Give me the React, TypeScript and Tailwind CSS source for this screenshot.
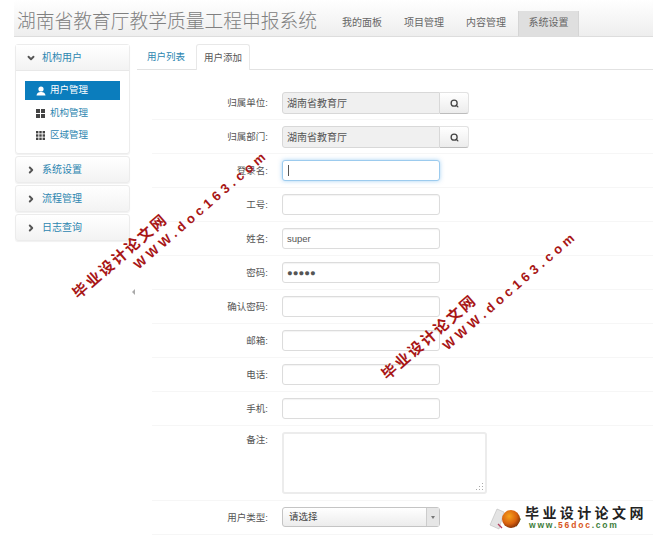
import { ChevronDown, ChevronRight, Search } from "lucide-react";

const navItems = ["我的面板", "项目管理", "内容管理"];

function UserIcon() {
  return (
    <svg width="10" height="10" viewBox="0 0 10 10" fill="#fff">
      <circle cx="5" cy="3" r="2.6" />
      <path d="M0.5 9.5 C1 6.5 3 6 5 6 C7 6 9 6.5 9.5 9.5 Z" />
    </svg>
  );
}

function LargeGrid() {
  return (
    <svg width="9" height="9" viewBox="0 0 9 9" fill="#444">
      <rect x="0" y="0" width="4" height="4" />
      <rect x="5" y="0" width="4" height="4" />
      <rect x="0" y="5" width="4" height="4" />
      <rect x="5" y="5" width="4" height="4" />
    </svg>
  );
}

function SmallGrid() {
  return (
    <svg width="9" height="9" viewBox="0 0 9 9" fill="#444">
      {[0, 3.3, 6.6].map((y) =>
        [0, 3.3, 6.6].map((x) => <rect key={`${x}-${y}`} x={x} y={y} width="2.4" height="2.4" />)
      )}
    </svg>
  );
}

function Collapsed({ title }: { title: string }) {
  return (
    <div className="h-[27px] rounded-[3px] border border-[#ececec] bg-gradient-to-b from-white to-[#f3f3f3] flex items-center pl-[10px] gap-[6px] shadow-[0_1px_1px_rgba(0,0,0,0.06)]">
      <ChevronRight size={10} strokeWidth={4.5} className="text-[#555]" />
      <span className="text-[10px] text-[#2d86b0]">{title}</span>
    </div>
  );
}

function Row({ label, children, tall }: { label: string; children: React.ReactNode; tall?: boolean }) {
  return (
    <div className={`flex border-b border-[#f6f6f6] pt-[6px] ${tall ? "h-[75px]" : "h-[34px]"}`}>
      <div className={`w-[116px] text-right text-[9.5px] text-[#555] ${tall ? "pt-[1px]" : "leading-[21px]"}`}>{label}:</div>
      <div className="ml-[14px]">{children}</div>
    </div>
  );
}

function Field({ value }: { value?: string }) {
  return (
    <div className="w-[158px] h-[21px] rounded-[3px] border border-[#dcdcdc] bg-white shadow-[inset_0_1px_1px_rgba(0,0,0,0.05)] px-[4px] text-[9.5px] leading-[19px] text-[#555]">
      {value}
    </div>
  );
}

function Lookup() {
  return (
    <div className="flex">
      <div className="w-[158px] h-[22px] rounded-l-[3px] border border-[#d8d8d8] bg-[#f0f0f0] px-[4px] text-[10px] leading-[21px] text-[#555]">
        湖南省教育厅
      </div>
      <div className="w-[29px] h-[22px] rounded-r-[3px] border border-l-0 border-[#e2e2e2] border-b-[#bcbcbc] bg-gradient-to-b from-white to-[#ececec] flex items-center justify-center">
        <Search size={9} strokeWidth={3.5} className="text-[#444]" />
      </div>
    </div>
  );
}

function Watermark({ place }: { place: string }) {
  return (
    <div className={`absolute origin-top-left -rotate-[41deg] text-[#a81616] font-bold whitespace-nowrap pointer-events-none ${place}`}>
      <div className="text-[15px] leading-[18px] tracking-[2.2px]">毕业设计论文网</div>
      <div className="text-[13px] leading-[17px] tracking-[4.2px] ml-[65px]">WWW.doc163.com</div>
    </div>
  );
}

export default function App() {
  return (
    <div className="relative w-[653px] h-[536px] overflow-hidden bg-white [font-family:'Liberation_Sans','Noto_Sans_CJK_SC',sans-serif]">
      {/* Top bar */}
      <div className="h-[37px] flex items-end bg-gradient-to-b from-white to-[#eeeeee] border-b border-[#dddddd] ml-[14px]">
        <div className="w-[316px] self-center pt-[7px] pl-[3px] text-[18.75px] font-light leading-[30px] text-[#808080] whitespace-nowrap">
          湖南省教育厅教学质量工程申报系统
        </div>
        <div className="flex h-[25px] ml-[12px]">
          {navItems.map((item) => (
            <div key={item} className="w-[62px] text-[10px] leading-[24px] text-[#666]">
              {item}
            </div>
          ))}
          <div className="-ml-[10px] w-[61px] bg-[#dfdfdf] border-x border-[#d5d5d5] text-center text-[10px] leading-[24px] text-[#666]">
            系统设置
          </div>
        </div>
      </div>

      <div className="flex pt-[7px]">
        {/* Sidebar */}
        <div className="w-[115px] ml-[15px] flex flex-col gap-[2px]">
          <div className="rounded-[3px] border border-[#ececec] shadow-[0_1px_1px_rgba(0,0,0,0.06)]">
            <div className="h-[26px] bg-gradient-to-b from-white to-[#f3f3f3] border-b border-[#e8e8e8] flex items-center pl-[10px] gap-[6px]">
              <ChevronDown size={10} strokeWidth={4.5} className="text-[#555]" />
              <span className="text-[10px] text-[#2d86b0]">机构用户</span>
            </div>
            <div className="h-[82px] pl-[9px] pt-[10px] pr-[9px]">
              <div className="h-[19px] bg-[#0b7dbd] flex items-center pl-[11px] gap-[4px] text-[9.5px] text-white">
                <UserIcon />
                用户管理
              </div>
              <div className="h-[22px] mt-[2px] flex items-center pl-[11px] gap-[5px] text-[9.5px] text-[#2d86b0]">
                <LargeGrid />
                机构管理
              </div>
              <div className="h-[22px] flex items-center pl-[11px] gap-[5px] text-[9.5px] text-[#2d86b0]">
                <SmallGrid />
                区域管理
              </div>
            </div>
          </div>
          <Collapsed title="系统设置" />
          <Collapsed title="流程管理" />
          <Collapsed title="日志查询" />
        </div>

        {/* Main */}
        <div className="flex-1 ml-[7px]">
          <div className="h-[26px] flex border-b border-[#e2e2e2] pl-[1px]">
            <div className="w-[58px] pl-[9px] text-[9.5px] leading-[26px] text-[#2d86b0]">用户列表</div>
            <div className="w-[54px] h-[26px] bg-white border border-b-0 border-[#e8e8e8] rounded-t-[3px] text-center text-[9.5px] leading-[26px] text-[#555]">
              用户添加
            </div>
          </div>
          <div className="ml-[15px] pt-[16px]">
            <Row label="归属单位">
              <Lookup />
            </Row>
            <Row label="归属部门">
              <Lookup />
            </Row>
            <Row label="登录名">
              <div className="w-[158px] h-[21px] rounded-[3px] border border-[#9ccbee] bg-white shadow-[0_0_4px_rgba(82,168,236,0.5)] flex items-center pl-[5px]">
                <div className="w-px h-[11px] bg-[#555]" />
              </div>
            </Row>
            <Row label="工号">
              <Field />
            </Row>
            <Row label="姓名">
              <Field value="super" />
            </Row>
            <Row label="密码">
              <Field value="●●●●●" />
            </Row>
            <Row label="确认密码">
              <Field />
            </Row>
            <Row label="邮箱">
              <Field />
            </Row>
            <Row label="电话">
              <Field />
            </Row>
            <Row label="手机">
              <Field />
            </Row>
            <Row label="备注" tall>
              <div className="relative">
                <textarea
                  readOnly
                  className="block w-[205px] h-[62px] resize-none rounded-[3px] border-2 border-[#ececec] bg-white"
                />
                {/* Resize grip */}
                <svg className="absolute right-[3px] bottom-[3px]" width="9" height="9" viewBox="0 0 9 9" fill="#aaaaaa">
                  <rect x="7" y="1" width="1" height="1" />
                  <rect x="4" y="4" width="1" height="1" />
                  <rect x="7" y="4" width="1" height="1" />
                  <rect x="1" y="7" width="1" height="1" />
                  <rect x="4" y="7" width="1" height="1" />
                  <rect x="7" y="7" width="1" height="1" />
                </svg>
              </div>
            </Row>
            <Row label="用户类型">
              <div className="w-[158px] h-[20px] flex rounded-[3px] border border-[#c4c4c4] bg-gradient-to-b from-white to-[#ececec]">
                <div className="flex-1 pl-[6px] text-[9.5px] leading-[18px] text-[#444]">请选择</div>
                <div className="w-[13px] border-l border-[#cccccc] bg-[#e6e6e6] flex items-center justify-center">
                  <div className="w-0 h-0 border-x-[2.5px] border-x-transparent border-t-[3px] border-t-[#777]" />
                </div>
              </div>
            </Row>
          </div>
        </div>
      </div>

      {/* Sidebar collapse handle */}
      <div className="absolute left-[132px] top-[289px] w-0 h-0 border-y-[3px] border-y-transparent border-r-[3px] border-r-[#aaaaaa]" />

      <Watermark place="left-[69px] top-[289px]" />
      <Watermark place="left-[378px] top-[370px]" />

      {/* Bottom-right site logo */}
      <div className="absolute left-[489px] top-[507px] flex items-center">
        <svg width="34" height="24" viewBox="0 0 34 24">
          <defs>
            <radialGradient id="ball" cx="0.4" cy="0.35" r="0.7">
              <stop offset="0" stopColor="#f6a21c" />
              <stop offset="0.6" stopColor="#d9620e" />
              <stop offset="1" stopColor="#7c2c06" />
            </radialGradient>
          </defs>
          <path d="M1 18 L8 2 L15 5 L10 22 Z" fill="#e4e4e4" stroke="#bbbbbb" strokeWidth="0.6" />
          <path d="M9 17 L13 21" stroke="#b53a5a" strokeWidth="1.2" />
          <path d="M25 6 L32 12 L27 20 Z" fill="#4f7d2a" />
          <circle cx="22" cy="12" r="9" fill="url(#ball)" />
        </svg>
        <div className="ml-[2px] -mt-[3px]">
          <div className="text-[14px] leading-[15px] tracking-[3.4px] font-bold text-[#222] whitespace-nowrap">
            毕业设计论文网
          </div>
          <div className="text-[8.5px] leading-[9px] tracking-[1.8px] font-bold text-[#3d7d3a] whitespace-nowrap pl-[4px]">
            www.<span className="text-[#d8541a]">56doc</span>.com
          </div>
        </div>
      </div>
    </div>
  );
}
